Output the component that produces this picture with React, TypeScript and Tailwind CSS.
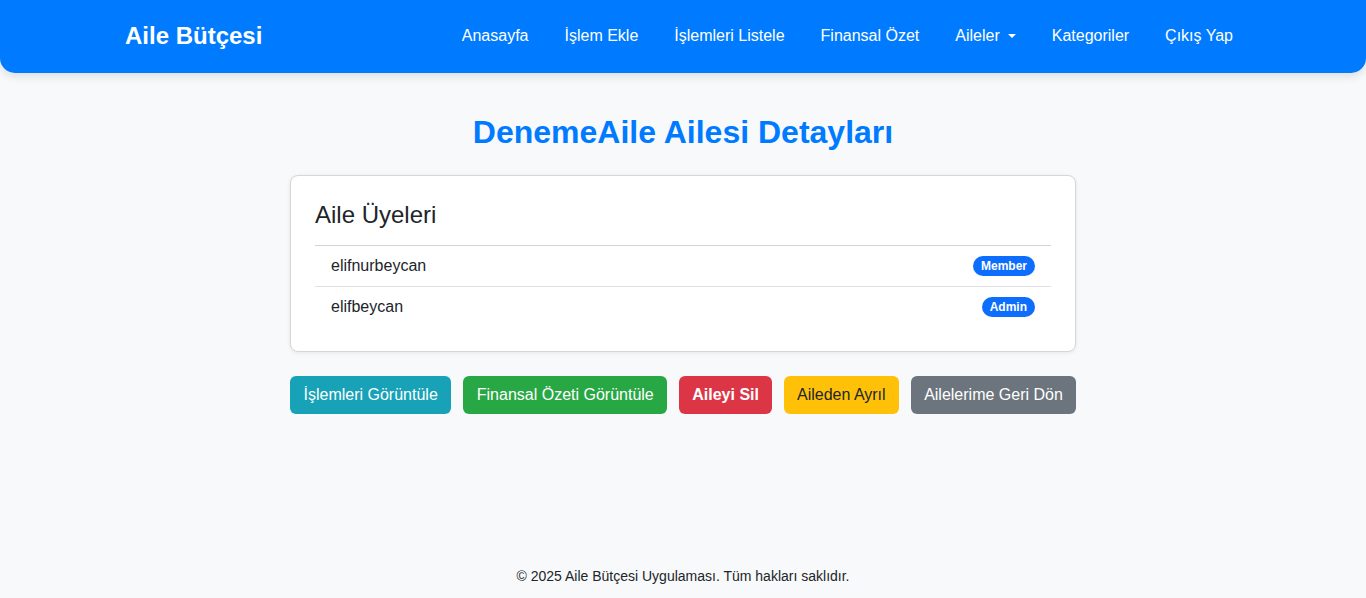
import React from "react";

const links = ["Anasayfa", "İşlem Ekle", "İşlemleri Listele", "Finansal Özet", "Aileler", "Kategoriler", "Çıkış Yap"];

export default function App() {
  return (
    <div
      className="min-h-screen flex flex-col bg-[#f8f9fa] text-[#212529]"
      style={{ fontFamily: '"Liberation Sans", Arial, sans-serif' }}
    >
      <nav className="h-[73px] bg-[#007bff] rounded-b-[15px] shadow-[0_4px_8px_rgba(0,0,0,0.1)] flex items-center pl-[125px] pr-[133px]">
        <div className="text-white text-[24px] font-bold leading-[29px] -mt-[2px]">Aile Bütçesi</div>
        <div className="ml-auto flex items-center gap-[36px] text-white text-[16px] leading-6 -mt-[2px]">
          {links.map((l) => (
            <span key={l} className="flex items-center">
              {l}
              {l === "Aileler" && (
                <span className="ml-[8px] inline-block w-0 h-0 border-l-[4px] border-r-[4px] border-t-[4px] border-l-transparent border-r-transparent border-t-white" />
              )}
            </span>
          ))}
        </div>
      </nav>

      <main className="w-[786px] mx-auto mt-[40px]">
        <h1 className="text-center text-[32px] font-bold leading-[38px] text-[#007bff] mb-[24px]">
          DenemeAile Ailesi Detayları
        </h1>
        <div className="bg-white border border-[#d6d6d6] rounded-[8px] shadow-[0_1px_4px_rgba(0,0,0,0.08)] p-[24px]">
          <h4 className="text-[24px] leading-[29px] mb-[16px]">Aile Üyeleri</h4>
          <ul className="border-t border-[#d3d3d3]">
            <li className="flex items-center justify-between px-4 py-2 border-b border-[#dee2e6] text-[16px] leading-6">
              <span>elifnurbeycan</span>
              <span className="bg-[#0d6efd] text-white text-[12px] font-bold rounded-full px-2 h-5 flex items-center">Member</span>
            </li>
            <li className="flex items-center justify-between px-4 py-2 text-[16px] leading-6">
              <span>elifbeycan</span>
              <span className="bg-[#0d6efd] text-white text-[12px] font-bold rounded-full px-2 h-5 flex items-center">Admin</span>
            </li>
          </ul>
        </div>
        <div className="flex gap-[12px] mt-[24px] whitespace-nowrap">
          <button className="shrink-0 bg-[#17a2b8] text-white text-[16px] leading-6 px-[13.5px] py-[7px] rounded-[6px]">İşlemleri Görüntüle</button>
          <button className="shrink-0 bg-[#28a745] text-white text-[16px] leading-6 px-[13.5px] py-[7px] rounded-[6px]">Finansal Özeti Görüntüle</button>
          <button className="shrink-0 bg-[#dc3545] text-white text-[16px] font-bold leading-6 px-[13px] py-[7px] rounded-[6px]">Aileyi Sil</button>
          <button className="shrink-0 bg-[#ffc107] text-[#212529] text-[16px] leading-6 px-[13px] py-[7px] rounded-[6px]">Aileden Ayrıl</button>
          <button className="shrink-0 bg-[#6c757d] text-white text-[16px] leading-6 px-[13.5px] py-[7px] rounded-[6px]">Ailelerime Geri Dön</button>
        </div>
      </main>

      <footer className="mt-auto text-center text-[14px] leading-[21px] pb-[11px] text-[#212529]">
        © 2025 Aile Bütçesi Uygulaması. Tüm hakları saklıdır.
      </footer>
    </div>
  );
}
